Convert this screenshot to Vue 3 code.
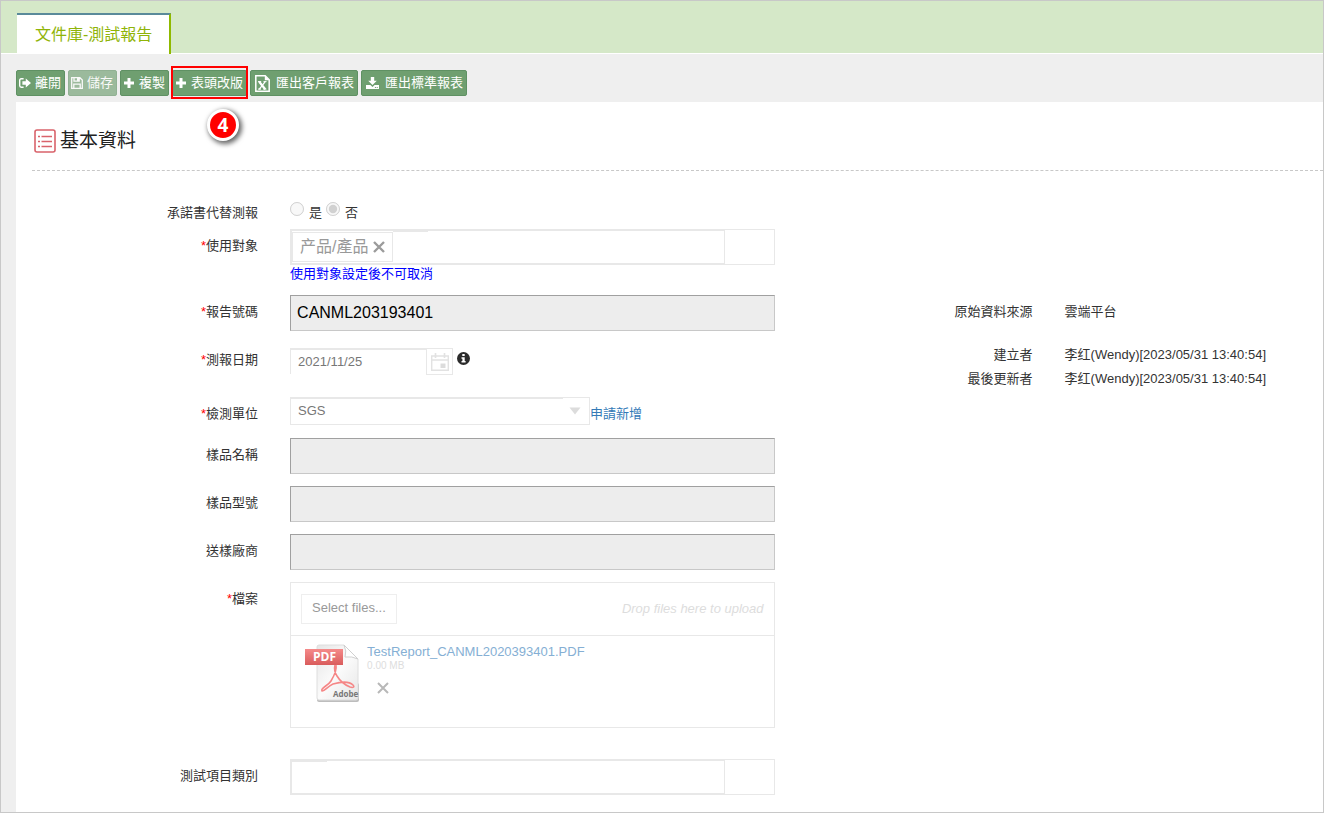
<script setup>
import { ref } from 'vue'

const substitute = ref('no')
const reportNo = ref('CANML203193401')
const reportDate = ref('2021/11/25')
const lab = ref('SGS')

const textRows = [
  { id: 'sample-name', label: '樣品名稱' },
  { id: 'sample-model', label: '樣品型號' },
  { id: 'sample-vendor', label: '送樣廠商' }
]

const meta = [
  { label: '原始資料來源', value: '雲端平台' },
  { label: '建立者', value: '李红(Wendy)[2023/05/31 13:40:54]' },
  { label: '最後更新者', value: '李红(Wendy)[2023/05/31 13:40:54]' }
]
</script>

<template>
  <div class="page">
    <nav class="tabs">
      <a class="tab" href="#">文件庫-測試報告</a>
    </nav>

    <div class="toolbar">
      <button type="button" class="btn">
        <svg width="12" height="10" viewBox="0 0 12 10">
          <path d="M4.6 .8H2.200Q.7.8.7 2.400v5.200q0 1.600 1.500 1.600h2.400" fill="none" stroke="#fff" stroke-width="1.400" />
          <path d="M3.400 3.200h3.400V.6L12 5 6.800 9.400V6.800H3.400z" fill="#fff" />
        </svg>
        離開
      </button>
      <button type="button" class="btn" disabled>
        <svg width="12" height="12" viewBox="0 0 12 12">
          <path d="M.7.7h8.200l2.400 2.400v8.200H.7zM3 .7v3.500h5.200V.7M2.800 11.300V7.200h6.400v4.100" fill="none" stroke="#fff" stroke-width="1.300" />
          <path d="M6 1h2v3H6z" fill="#fff" />
        </svg>
        儲存
      </button>
      <button type="button" class="btn">
        <svg width="12" height="12" viewBox="0 0 12 12"><path d="M4.500 1h3v3.500H11v3H7.500V11h-3V7.500H1v-3h3.500z" fill="#fff" /></svg>
        複製
      </button>
      <div class="marked">
        <button type="button" class="btn">
          <svg width="12" height="12" viewBox="0 0 12 12"><path d="M4.500 1h3v3.500H11v3H7.500V11h-3V7.500H1v-3h3.500z" fill="#fff" /></svg>
          表頭改版
        </button>
        <span class="frame"></span>
        <span class="step">4</span>
      </div>
      <button type="button" class="btn wide">
        <svg width="15" height="17" viewBox="0 0 15 17">
          <path d="M.8.8h9.400l4 4v11.400H.8z" fill="none" stroke="#fff" stroke-width="1.500" />
          <path d="M9.800.5v4.700h4.700" fill="#fff" />
          <path d="M4.200 6.700l6 7.600" stroke="#fff" stroke-width="2.200" />
          <path d="M10.200 6.700l-6 7.600" stroke="#fff" stroke-width="1.300" />
          <path d="M3 6.600h3.200M8.500 6.600h3M3 14.100h3M8.200 14.100h3.200" stroke="#fff" stroke-width="1" />
        </svg>
        匯出客戶報表
      </button>
      <button type="button" class="btn wide">
        <svg width="13" height="12" viewBox="0 0 13 12">
          <path d="M4.800 0h3.400v3.800h2.600L6.500 8 2.200 3.800h2.600z" fill="#fff" />
          <path d="M0 8h4.400l2.100 1.900L8.600 8H13v4H0z" fill="#fff" />
          <path d="M8.900 10h1v.9h-1zm1.800 0h1v.9h-1z" fill="#6f9f70" />
        </svg>
        匯出標準報表
      </button>
    </div>

    <main class="card">
      <header class="heading">
        <svg width="22" height="24" viewBox="0 0 22 24">
          <rect x="1" y="1" width="20" height="22" rx="2" fill="none" stroke="#d9636b" stroke-width="1.600" />
          <path d="M7.500 7.500H18M7.500 12.500H18M7.500 17.500H18" stroke="#d9636b" stroke-width="1.400" />
          <path d="M4 7.500h2M4 12.500h2M4 17.500h2" stroke="#d9636b" stroke-width="1.400" />
        </svg>
        <h1>基本資料</h1>
      </header>

      <form class="form" @submit.prevent>
        <div class="fields">
          <div class="row tight">
            <span id="sub-label" class="label">承諾書代替測報</span>
            <div class="radios" role="radiogroup" aria-labelledby="sub-label">
              <input id="sub-yes" v-model="substitute" type="radio" value="yes" disabled />
              <label for="sub-yes">是</label>
              <input id="sub-no" v-model="substitute" type="radio" value="no" disabled />
              <label for="sub-no">否</label>
            </div>
          </div>

          <div class="row">
            <label class="label" for="target"><i>*</i>使用對象</label>
            <div>
              <div class="multi">
                <div class="multi-inner">
                  <span class="chip">产品/產品
                    <button type="button" class="remove" aria-label="移除">
                      <svg width="12" height="12" viewBox="0 0 12 12"><path d="M1 1l10 10M11 1L1 11" stroke="#9b9b9b" stroke-width="2.400" /></svg>
                    </button>
                  </span>
                  <input id="target" type="text" disabled />
                </div>
              </div>
              <p class="hint">使用對象設定後不可取消</p>
            </div>
          </div>

          <div class="row">
            <label class="label" for="report-no"><i>*</i>報告號碼</label>
            <input id="report-no" v-model="reportNo" class="text" type="text" readonly />
          </div>

          <div class="row">
            <label class="label" for="report-date"><i>*</i>測報日期</label>
            <div class="date">
              <input id="report-date" v-model="reportDate" type="text" disabled />
              <button type="button" class="calendar" aria-label="選擇日期">
                <svg width="18" height="18" viewBox="0 0 18 18">
                  <path d="M.7 3h16.600v14.300H.7z" fill="none" stroke="#e2e2e2" stroke-width="1.400" />
                  <path d="M.7 7h16.600M4.500 0v5M13.500 0v5" stroke="#e2e2e2" stroke-width="1.600" />
                  <path d="M9.500 10.500h5V15h-5z" fill="#dcdcdc" />
                </svg>
              </button>
              <svg class="info" width="13" height="13" viewBox="0 0 13 13">
                <circle cx="6.500" cy="6.500" r="6.500" fill="#2b2b2b" />
                <path d="M5.300 2h2.400v2H5.300zM4.500 5.200h3.200v3.900h.9v1.500H4.500V9.100h.9V6.700h-.9z" fill="#fff" />
              </svg>
            </div>
          </div>

          <div class="row">
            <label class="label" for="lab"><i>*</i>檢測單位</label>
            <div class="lab">
              <div class="dropdown">
                <select id="lab" v-model="lab" disabled>
                  <option>SGS</option>
                </select>
                <svg width="12" height="8" viewBox="0 0 12 8"><path d="M.5.500h11L6 7.500z" fill="#dcdcdc" /></svg>
              </div>
              <a href="#">申請新增</a>
            </div>
          </div>

          <div v-for="row in textRows" :key="row.id" class="row">
            <label class="label" :for="row.id">{{ row.label }}</label>
            <input :id="row.id" class="text" type="text" readonly />
          </div>

          <div class="row loose">
            <span class="label"><i>*</i>檔案</span>
            <div class="upload">
              <div class="upload-head">
                <button type="button" class="select-files">Select files...</button>
                <em>Drop files here to upload</em>
              </div>
              <div class="file">
                <svg width="56" height="60" viewBox="0 0 56 60">
                  <defs>
                    <linearGradient id="sheet" x1="0" y1="0" x2="1" y2="1">
                      <stop offset="0" stop-color="#e6e6e6" /><stop offset=".5" stop-color="#fbfbfb" /><stop offset="1" stop-color="#e6e6e6" />
                    </linearGradient>
                    <linearGradient id="ribbon" x1="0" y1="0" x2="0" y2="1">
                      <stop offset="0" stop-color="#f58a8a" /><stop offset="1" stop-color="#d95c5c" />
                    </linearGradient>
                  </defs>
                  <rect x="13" y="40" width="42" height="19" rx="2" fill="#bdbdbd" />
                  <path d="M15 2h25l14 14v39q0 2-2 2H15q-2 0-2-2V4q0-2 2-2z" fill="url(#sheet)" stroke="#dedede" />
                  <path d="M40 2q3 6 1 12 7-1 13 2z" fill="#fff" stroke="#d0d0d0" />
                  <rect x="1" y="6" width="38" height="16" fill="url(#ribbon)" />
                  <path d="M31 22c-1 4 0 8 2 11 3 5 8 9 13 11 3 1 5 0 3-2-4-4-13-3-20-1-5 2-9 8-11 7-2-3 6-5 9-10 3-5 6-11 5-16" fill="none" stroke="#f58787" stroke-width="1.600" />
                  <text x="29" y="54" class="brand-text">Adobe</text>
                  <text x="9" y="18" class="ribbon-text">PDF</text>
                </svg>
                <div class="file-info">
                  <a href="#">TestReport_CANML2020393401.PDF</a>
                  <small>0.00 MB</small>
                  <button type="button" class="remove" aria-label="刪除檔案">
                    <svg width="12" height="12" viewBox="0 0 12 12"><path d="M1 1l10 10M11 1L1 11" stroke="#b8b8b8" stroke-width="2" /></svg>
                  </button>
                </div>
              </div>
            </div>
          </div>

          <div class="row">
            <label class="label" for="category">測試項目類別</label>
            <div class="multi">
              <div class="multi-inner"><input id="category" type="text" disabled /></div>
            </div>
          </div>
        </div>

        <dl class="meta">
          <div v-for="item in meta" :key="item.label" class="meta-row">
            <dt>{{ item.label }}</dt>
            <dd>{{ item.value }}</dd>
          </div>
        </dl>
      </form>
    </main>
  </div>
</template>

<style>
body {
  margin: 0;
}
</style>

<style scoped>
.page {
  --line: #e8e8e8;
  box-sizing: border-box;
  display: flex;
  flex-direction: column;
  min-height: 100vh;
  border: 1px solid #c8c8c8;
  background: #efefef;
  color: #333;
  font: 13px/18px "Liberation Sans", "Noto Sans CJK TC", sans-serif;
}
.page * {
  box-sizing: border-box;
}
button,
input,
select {
  margin: 0;
  padding: 0;
  border: 0;
  border-radius: 0;
  background: transparent;
  color: inherit;
  font: inherit;
}
svg {
  display: block;
  flex: none;
}
a {
  color: #337ab7;
  text-decoration: none;
}

.tabs {
  display: flex;
  align-items: flex-end;
  height: 53px;
  padding-left: 16px;
  border-bottom: 1px solid #fff;
  background: #d5e8c8;
}
.tab {
  height: 41px;
  margin-bottom: -1px;
  padding: 0 17px 0 18px;
  border-top: 2px solid #5a8a9a;
  border-right: 2px solid #8fb900;
  background: #fff;
  color: #8fb408;
  font-size: 16px;
  line-height: 40px;
}

.toolbar {
  display: flex;
  gap: 3px;
  padding: 16px 15px 6px;
}
.btn {
  display: flex;
  align-items: center;
  gap: 4px;
  height: 26px;
  padding: 0 3px 0 2px;
  border: 1px solid #5f9163;
  border-radius: 2px;
  background: #6f9f70;
  color: #fff;
  white-space: nowrap;
}
.btn:disabled {
  opacity: 0.65;
}
.btn.wide {
  gap: 6px;
  padding-left: 4px;
}
.marked {
  position: relative;
}
.frame {
  position: absolute;
  inset: -4px -1px -3px;
  border: 2px solid #f00;
}
.step {
  position: absolute;
  top: 39px;
  left: 35px;
  width: 32px;
  height: 32px;
  border: 3px solid #fff;
  border-radius: 50%;
  background: #f00;
  box-shadow: 2px 2px 5px 1px rgba(0, 0, 0, 0.6);
  color: #fff;
  font: bold 19px/26px "Open Sans", sans-serif;
  text-align: center;
}

.card {
  flex: 1;
  margin-left: 15px;
  padding-left: 16px;
  background: #fff;
}
.heading {
  display: flex;
  align-items: center;
  gap: 4px;
  height: 69px;
  padding: 10px 0 0 2px;
  border-bottom: 1px dashed #c8c8c8;
}
h1 {
  margin: 0;
  color: #222;
  font-size: 19px;
  font-weight: normal;
  line-height: 24px;
}

.form {
  display: grid;
  grid-template-columns: minmax(0, 7fr) minmax(0, 15fr) minmax(0, 7fr) minmax(0, 8fr);
  column-gap: 32px;
  padding: 25px 0 16px;
}
.fields,
.row,
.meta,
.meta-row {
  display: grid;
  grid-template-columns: subgrid;
  align-content: start;
}
.fields {
  grid-column: 1 / 3;
}
.row {
  grid-column: 1 / -1;
  align-items: start;
  margin-bottom: 12px;
}
.row.tight {
  margin-bottom: 7px;
}
.row.loose {
  margin-bottom: 31px;
}
.row:last-child {
  margin-bottom: 0;
}
.label {
  padding-top: 8px;
  text-align: right;
}
.label i {
  color: #f00;
  font-style: normal;
}

.radios {
  display: flex;
  align-items: flex-end;
}
.radios input {
  width: 14px;
  height: 14px;
  margin: 6px 5px 6px 0;
}
.radios label {
  margin-right: 4px;
}

.multi {
  height: 36px;
  border: 1px solid var(--line);
}
.multi-inner {
  display: flex;
  width: 90%;
  height: 34px;
  border: 1px solid var(--line);
}
.multi-inner input {
  width: 35px;
  height: 30px;
  border-top: 1px solid var(--line);
}
.chip {
  display: flex;
  align-items: center;
  gap: 4px;
  height: 30px;
  margin: 1px 0;
  padding: 0 7px;
  border: 1px solid var(--line);
  color: #999;
  font-size: 16px;
  white-space: nowrap;
}
.hint {
  margin: 0;
  color: #00f;
}

.text {
  width: 100%;
  height: 36px;
  padding: 0 6px;
  border: 1px solid #c8c8c8;
  border-top-color: #a0a0a0;
  border-left-color: #a0a0a0;
  background: #ededed;
  color: #000;
  font-size: 16px;
}

.date {
  display: flex;
  align-items: flex-start;
  height: 42px;
  padding-top: 5px;
  color: #777;
}
.date input {
  width: 136px;
  height: 26px;
  padding: 0 7px 2px;
  border-top: 2px solid var(--line);
  border-left: 1px solid var(--line);
}
.calendar {
  display: grid;
  place-items: center;
  width: 27px;
  height: 27px;
  border: 1px solid var(--line);
}
.info {
  margin: 4px;
}

.lab {
  display: flex;
  height: 29px;
  line-height: 33px;
}
.dropdown {
  display: grid;
  align-items: center;
  width: 300px;
  height: 28px;
  border: 1px solid var(--line);
}
.dropdown > * {
  grid-area: 1 / 1;
}
.dropdown select {
  width: 100%;
  height: 26px;
  padding: 0 7px;
  background: linear-gradient(var(--line), var(--line)) 0 0 / calc(100% - 26px) 1px no-repeat;
  color: #777;
  line-height: 18px;
  opacity: 1;
  appearance: none;
}
.dropdown svg {
  justify-self: end;
  margin-right: 8px;
  pointer-events: none;
}

.upload {
  border: 1px solid var(--line);
}
.upload-head {
  display: flex;
  align-items: center;
  justify-content: space-between;
  height: 53px;
  padding: 0 10px;
  border-bottom: 1px solid var(--line);
}
.select-files {
  height: 30px;
  padding: 0 10px 2px;
  border: 1px solid #eee;
  color: #999;
}
.upload em {
  color: #ddd;
}
.file {
  display: flex;
  gap: 7px;
  height: 91px;
  padding: 7px 13px;
}
.ribbon-text {
  fill: #fff;
  font: bold 12px "Open Sans", sans-serif;
}
.brand-text {
  fill: #777;
  font: bold 8px "Open Sans", sans-serif;
}
.file-info {
  display: flex;
  flex-direction: column;
  align-items: flex-start;
}
.file-info a {
  color: #85afd4;
}
.file-info small {
  color: #ddd;
  font-size: 10px;
  line-height: 10px;
}
.file-info .remove {
  margin: 11px 10px;
}

.meta {
  grid-column: 3 / 5;
  margin: 107px 0 0;
}
.meta-row {
  grid-column: 1 / -1;
  margin-bottom: 6px;
}
.meta-row:first-child {
  margin-bottom: 25px;
}
.meta dt {
  text-align: right;
}
.meta dd {
  margin: 0;
  white-space: nowrap;
}
</style>
